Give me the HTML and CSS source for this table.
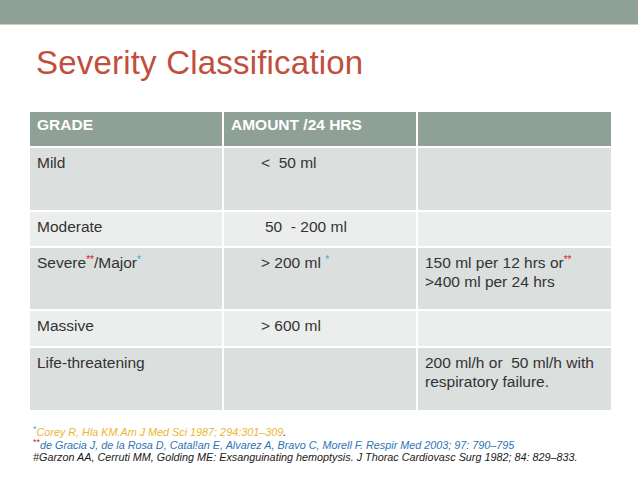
FILE: index.html
```html
<!DOCTYPE html>
<html>
<head>
<meta charset="utf-8">
<link rel="stylesheet" href="styles.css">
</head>
<body>
<div class="topbar"></div>
<h1 class="title">Severity Classification</h1>
<div class="table">
  <div class="cell head">GRADE</div>
  <div class="cell head">AMOUNT /24 HRS</div>
  <div class="cell head"></div>

  <div class="cell dark r-tall">Mild</div>
  <div class="cell dark r-tall amt">&lt;&nbsp; 50 ml</div>
  <div class="cell dark r-tall"></div>

  <div class="cell light r-short">Moderate</div>
  <div class="cell light r-short amt amt-mod">50 &nbsp;- 200 ml</div>
  <div class="cell light r-short"></div>

  <div class="cell dark r-tall2">Severe<span class="red sup">**</span>/Major<span class="cyan sup">*</span></div>
  <div class="cell dark r-tall2 amt">&gt; 200 ml <span class="cyan sup">*</span></div>
  <div class="cell dark r-tall2">150 ml per 12 hrs or<span class="red sup">**</span><br>&gt;400 ml per 24 hrs</div>

  <div class="cell light r-short2">Massive</div>
  <div class="cell light r-short2 amt">&gt; 600 ml</div>
  <div class="cell light r-short2"></div>

  <div class="cell dark r-tall3">Life-threatening</div>
  <div class="cell dark r-tall3"></div>
  <div class="cell dark r-tall3">200 ml/h or &nbsp;50 ml/h with respiratory failure.</div>
</div>
<div class="refs">
  <p class="ref"><span class="cyan fsup">*</span><span class="gold">Corey R, Hla KM.Am J Med Sci 1987; 294:301–309</span>.</p>
  <p class="ref"><span class="red fsup">**</span><span class="blue">de Gracia J, de la Rosa D, Catal!an E, Alvarez A, Bravo C, Morell F. Respir Med 2003; 97: 790–795</span></p>
  <p class="ref">#Garzon AA, Cerruti MM, Golding ME: Exsanguinating hemoptysis. J Thorac Cardiovasc Surg 1982; 84: 829–833.</p>
</div>
</body>
</html>
```

FILE: styles.css
```css
html, body {
  margin: 0;
  padding: 0;
  background: #ffffff;
}
body {
  width: 638px;
  height: 479px;
  overflow: hidden;
  font-family: "Liberation Sans", Arial, sans-serif;
}
.topbar {
  height: 24px;
  background: #8fa197;
  border-bottom: 1px solid #c6cfca;
}
.title {
  margin: 19px 0 0 0;
  padding-left: 36px;
  font-weight: normal;
  font-size: 33px;
  line-height: 38px;
  color: #c0503c;
  letter-spacing: 0.2px;
}
.table {
  margin: 30px 0 0 30px;
  width: 581px;
  display: grid;
  grid-template-columns: 192px 192px 193px;
  grid-template-rows: 34px 62px 34px 61px 35px 62px;
  gap: 2px;
  font-size: 15.5px;
  line-height: 19px;
  color: #333333;
}
.cell {
  padding: 5px 6px 0 7px;
  box-sizing: border-box;
}
.head {
  background: #8fa197;
  color: #ffffff;
  font-weight: bold;
  padding-top: 3px;
}
.dark { background: #dbdfde; }
.light { background: #eceeed; }
.amt { padding-left: 37px; }
.amt-mod { padding-left: 41px; }
.sup {
  font-size: 10px;
  vertical-align: 5px;
  line-height: 0;
}
.red { color: #d0202a; }
.cyan { color: #2bb3e0; }
.gold { color: #eab534; }
.blue { color: #2e74b5; }
.refs {
  margin: 16px 0 0 33px;
  font-size: 10.8px;
  line-height: 12.7px;
  font-style: italic;
  color: #1a1a1a;
}
.ref {
  margin: 0;
  white-space: nowrap;
}
.fsup {
  font-style: normal;
  font-size: 9px;
  vertical-align: 4px;
  line-height: 0;
}
```
